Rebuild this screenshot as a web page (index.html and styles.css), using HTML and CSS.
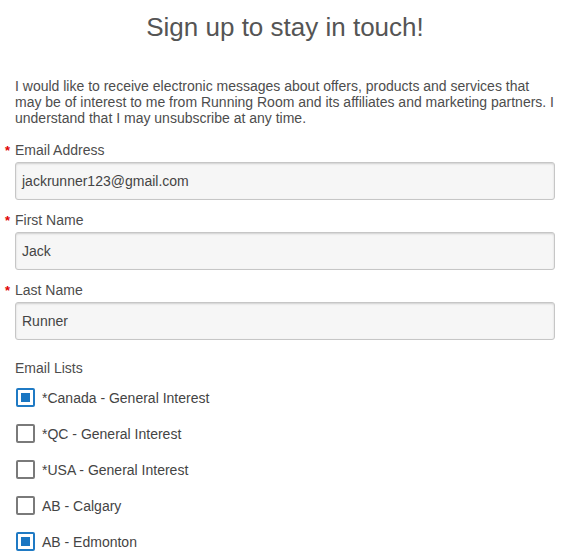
FILE: index.html
```html
<!DOCTYPE html>
<html>
<head>
<meta charset="utf-8">
<link rel="stylesheet" href="styles.css">
</head>
<body>
<div class="page">
  <h1 class="title">Sign up to stay in touch!</h1>
  <p class="intro">I would like to receive electronic messages about offers, products and services that may be of interest to me from Running Room and its affiliates and marketing partners. I understand that I may unsubscribe at any time.</p>

  <div class="field">
    <label class="label"><span class="req">*</span>Email Address</label>
    <div class="input">jackrunner123@gmail.com</div>
  </div>
  <div class="field">
    <label class="label"><span class="req">*</span>First Name</label>
    <div class="input">Jack</div>
  </div>
  <div class="field">
    <label class="label"><span class="req">*</span>Last Name</label>
    <div class="input">Runner</div>
  </div>

  <div class="lists">
    <div class="lists-title">Email Lists</div>
    <div class="check-row"><span class="box checked"><span class="fill"></span></span><span class="check-label">*Canada - General Interest</span></div>
    <div class="check-row"><span class="box"></span><span class="check-label">*QC - General Interest</span></div>
    <div class="check-row"><span class="box"></span><span class="check-label">*USA - General Interest</span></div>
    <div class="check-row"><span class="box"></span><span class="check-label">AB - Calgary</span></div>
    <div class="check-row"><span class="box checked"><span class="fill"></span></span><span class="check-label">AB - Edmonton</span></div>
  </div>
</div>
</body>
</html>
```

FILE: styles.css
```css
html, body {
  margin: 0;
  padding: 0;
  background: #ffffff;
}
body {
  font-family: "Liberation Sans", Arial, Helvetica, sans-serif;
  color: #4d4d4d;
}
.page {
  width: 540px;
  padding: 0 15px;
}
.title {
  margin: 0;
  padding-top: 11px;
  font-size: 26px;
  line-height: 32px;
  font-weight: normal;
  text-align: center;
  color: #555555;
}
.intro {
  margin: 35px 0 0 0;
  font-size: 14px;
  line-height: 16px;
  color: #4d4d4d;
}
.field {
  margin-top: 15px;
}
.field + .field {
  margin-top: 11px;
}
.label {
  display: block;
  height: 18px;
  margin-bottom: 3px;
  font-size: 14px;
  line-height: 18px;
  color: #4d4d4d;
}
.req {
  display: inline-block;
  width: 10px;
  margin-left: -10px;
  color: #e00000;
  font-weight: bold;
  font-size: 13px;
  line-height: 18px;
}
.input {
  box-sizing: border-box;
  height: 38px;
  border: 1px solid #c6c6c6;
  border-radius: 3px;
  background: #f6f6f6;
  box-shadow: inset 0 1px 2px rgba(0, 0, 0, 0.16);
  padding: 0 6px;
  font-size: 14px;
  line-height: 36px;
  color: #444444;
}
.lists {
  margin-top: 19px;
}
.lists-title {
  height: 18px;
  font-size: 14px;
  line-height: 18px;
  margin-bottom: 11px;
  color: #4d4d4d;
}
.check-row {
  display: flex;
  align-items: center;
  height: 19px;
  margin-bottom: 17px;
  padding-left: 1px;
}
.box {
  box-sizing: border-box;
  width: 19px;
  height: 19px;
  border: 2px solid #7a7a7a;
  border-radius: 2px;
  background: #ffffff;
  padding: 3px;
  display: flex;
  flex: none;
}
.box.checked {
  border-color: #1f7ac4;
}
.fill {
  flex: 1;
  background: #1a76c2;
}
.check-label {
  margin-left: 7px;
  font-size: 14px;
  color: #444444;
}
```
